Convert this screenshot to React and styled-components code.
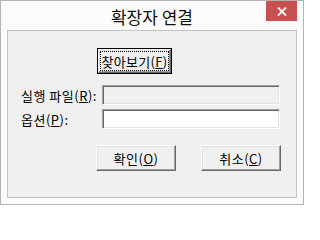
import React from "react";
import styled, { createGlobalStyle } from "styled-components";

const Global = createGlobalStyle`
  html, body { margin: 0; padding: 0; background: #ffffff; }
  body { font-family: "Noto Sans CJK KR", "Noto Sans", sans-serif; }
  * { box-sizing: border-box; }
`;

const Window = styled.div`
  width: 304px;
  height: 205px;
  border: 1px solid #b4b4b4;
  background: #fbfbfb;
  padding: 0 6px 6px 6px;
  display: flex;
  flex-direction: column;
`;

const TitleBar = styled.div`
  height: 29px;
  display: grid;
  grid-template-columns: 1fr auto 1fr;
  align-items: center;
`;

const Title = styled.div`
  grid-column: 2;
  font-family: "Noto Sans CJK KR", sans-serif;
  font-size: 17px;
  color: #111;
  line-height: 1;
  white-space: nowrap;
  padding-top: 1px;
`;

const CloseButton = styled.div`
  grid-column: 3;
  justify-self: end;
  align-self: start;
  width: 31px;
  height: 20px;
  background: #c75050;
  display: flex;
  align-items: center;
  justify-content: center;
`;

const Client = styled.div`
  flex: 1;
  border: 1px solid #c4c4c4;
  background: #f0f0f0;
  padding: 17px 15px 0 13px;
  display: flex;
  flex-direction: column;
  font-size: 13px;
  letter-spacing: 0.5px;
  color: #000;
`;

const FindRow = styled.div`
  display: flex;
  padding-left: 76px;
`;

const bevel = `
  border: 1px solid;
  border-color: #ffffff #696969 #696969 #ffffff;
  box-shadow: inset -1px -1px 0 #a0a0a0, inset 1px 1px 0 #e3e3e3;
  background: #f0f0f0;
`;

const DefaultButton = styled.div`
  width: 75px;
  height: 26px;
  border: 1px solid #000;
  display: flex;
`;

const DefaultInner = styled.div`
  ${bevel}
  flex: 1;
  padding: 2px;
  display: flex;
`;

const FocusRect = styled.div`
  flex: 1;
  outline: 1px dotted #000;
  outline-offset: 0;
  display: flex;
  align-items: center;
  justify-content: center;
  white-space: nowrap;
  line-height: 1;
  letter-spacing: 0.3px;
`;

const FieldGrid = styled.div`
  margin-top: 11px;
  display: grid;
  grid-template-columns: 81px 178px;
  grid-auto-rows: 20px;
  row-gap: 4px;
`;

const Label = styled.div`
  display: flex;
  align-items: center;
  white-space: nowrap;
  line-height: 1;
`;

const Field = styled.div`
  border: 1px solid;
  border-color: #a0a0a0 #ffffff #ffffff #a0a0a0;
  box-shadow: inset 1px 1px 0 #696969, inset -1px -1px 0 #e3e3e3;
  background: ${(p) => (p.$disabled ? "#f0f0f0" : "#ffffff")};
`;

const ButtonRow = styled.div`
  margin-top: 16px;
  display: flex;
  justify-content: flex-end;
  gap: 25px;
`;

const PushButton = styled.div`
  ${bevel}
  width: 80px;
  height: 26px;
  display: flex;
  align-items: center;
  justify-content: center;
  white-space: nowrap;
  line-height: 1;
`;

export default function App() {
  return (
    <>
      <Global />
      <Window>
        <TitleBar>
          <Title>확장자 연결</Title>
          <CloseButton>
            <svg width="10" height="9" viewBox="0 0 10 9">
              <path d="M1 0.5 L9 8.5 M9 0.5 L1 8.5" stroke="#ffffff" strokeWidth="1.8" />
            </svg>
          </CloseButton>
        </TitleBar>
        <Client>
          <FindRow>
            <DefaultButton>
              <DefaultInner>
                <FocusRect>
                  찾아보기(<u>F</u>)
                </FocusRect>
              </DefaultInner>
            </DefaultButton>
          </FindRow>
          <FieldGrid>
            <Label>
              실행 파일(<u>R</u>):
            </Label>
            <Field $disabled />
            <Label>
              옵션(<u>P</u>):
            </Label>
            <Field />
          </FieldGrid>
          <ButtonRow>
            <PushButton>
              확인(<u>O</u>)
            </PushButton>
            <PushButton>
              취소(<u>C</u>)
            </PushButton>
          </ButtonRow>
        </Client>
      </Window>
    </>
  );
}
